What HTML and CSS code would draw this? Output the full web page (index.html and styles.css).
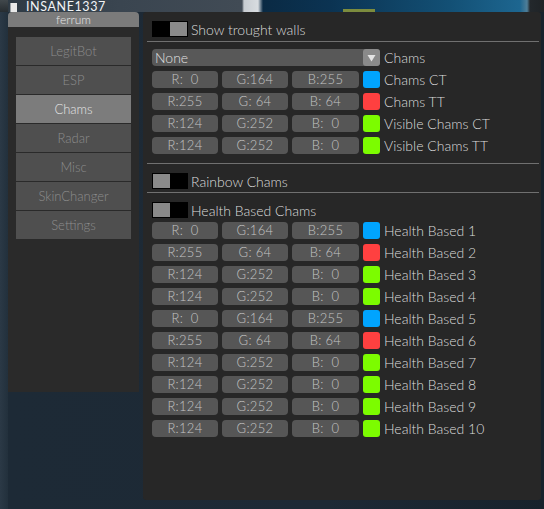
FILE: index.html
```html
<!DOCTYPE html>
<html>
<head>
<meta charset="utf-8">
<link rel="stylesheet" href="styles.css">
</head>
<body>
<div class="hud">
  <span class="avatar"></span>
  <span class="flag"></span>
  <span class="name">INSANE1337</span>
</div>
<div class="menus">
  <div class="side">
    <div class="side-title">ferrum</div>
    <div class="side-body">
      <div class="tab">LegitBot</div>
      <div class="tab">ESP</div>
      <div class="tab active">Chams</div>
      <div class="tab">Radar</div>
      <div class="tab">Misc</div>
      <div class="tab">SkinChanger</div>
      <div class="tab">Settings</div>
    </div>
  </div>
  <div class="panel">
    <div class="check first"><span class="toggle on"><i></i><i></i></span><span class="label">Show trought walls</span></div>
    <div class="sep"></div>
    <div class="combo-row">
      <div class="combo"><span class="combo-text">None</span><span class="combo-arrow"><svg width="9" height="8" viewBox="0 0 9 8"><path d="M0.5 1 L8.5 1 L4.5 7.5 Z" fill="#e4e4e4"/></svg></span></div>
      <span class="label">Chams</span>
    </div>
    <div class="rows top-rows">
      <div class="row"><span class="box">R:  0</span><span class="box">G:164</span><span class="box wide">B:255</span><span class="sw blue"></span><span class="label">Chams CT</span></div>
      <div class="row"><span class="box">R:255</span><span class="box">G: 64</span><span class="box wide">B: 64</span><span class="sw red"></span><span class="label">Chams TT</span></div>
      <div class="row"><span class="box">R:124</span><span class="box">G:252</span><span class="box wide">B:  0</span><span class="sw green"></span><span class="label">Visible Chams CT</span></div>
      <div class="row"><span class="box">R:124</span><span class="box">G:252</span><span class="box wide">B:  0</span><span class="sw green"></span><span class="label">Visible Chams TT</span></div>
    </div>
    <div class="sep sep2"></div>
    <div class="check second"><span class="toggle off"><i></i><i></i></span><span class="label">Rainbow Chams</span></div>
    <div class="sep sep3"></div>
    <div class="check third"><span class="toggle off"><i></i><i></i></span><span class="label">Health Based Chams</span></div>
    <div class="rows hb-rows">
      <div class="row"><span class="box">R:  0</span><span class="box">G:164</span><span class="box wide">B:255</span><span class="sw blue"></span><span class="label">Health Based 1</span></div>
      <div class="row"><span class="box">R:255</span><span class="box">G: 64</span><span class="box wide">B: 64</span><span class="sw red"></span><span class="label">Health Based 2</span></div>
      <div class="row"><span class="box">R:124</span><span class="box">G:252</span><span class="box wide">B:  0</span><span class="sw green"></span><span class="label">Health Based 3</span></div>
      <div class="row"><span class="box">R:124</span><span class="box">G:252</span><span class="box wide">B:  0</span><span class="sw green"></span><span class="label">Health Based 4</span></div>
      <div class="row"><span class="box">R:  0</span><span class="box">G:164</span><span class="box wide">B:255</span><span class="sw blue"></span><span class="label">Health Based 5</span></div>
      <div class="row"><span class="box">R:255</span><span class="box">G: 64</span><span class="box wide">B: 64</span><span class="sw red"></span><span class="label">Health Based 6</span></div>
      <div class="row"><span class="box">R:124</span><span class="box">G:252</span><span class="box wide">B:  0</span><span class="sw green"></span><span class="label">Health Based 7</span></div>
      <div class="row"><span class="box">R:124</span><span class="box">G:252</span><span class="box wide">B:  0</span><span class="sw green"></span><span class="label">Health Based 8</span></div>
      <div class="row"><span class="box">R:124</span><span class="box">G:252</span><span class="box wide">B:  0</span><span class="sw green"></span><span class="label">Health Based 9</span></div>
      <div class="row"><span class="box">R:124</span><span class="box">G:252</span><span class="box wide">B:  0</span><span class="sw green"></span><span class="label">Health Based 10</span></div>
    </div>
  </div>
</div>
</body>
</html>
```
FILE: styles.css
```css
html, body {
  margin: 0;
  padding: 0;
}
body {
  width: 544px;
  height: 509px;
  overflow: hidden;
  font-family: Lato, "Liberation Sans", sans-serif;
  font-weight: 300;
  background:
    linear-gradient(90deg, #2b3946 0px, #22303c 8px, #1d2a36 8px, #1d2935 60%, #17222c 100%);
}
.hud {
  height: 12px;
  overflow: hidden;
  display: flex;
  align-items: flex-start;
  background:
    linear-gradient(90deg, transparent 343px, #7c8c3e 343px, #7c8c3e 375px, transparent 375px) 0 9px / 100% 3px no-repeat,
    linear-gradient(90deg, #2e3a44 0px, #3a4550 120px, #414b55 242px, #c7ccd1 244px, #d8dce0 258px, #0a2a44 263px, #0b3352 330px, #135075 450px, #1d6690 520px, #4f7e98 527px, #23282c 530px, #1f2326 544px);
}
.avatar {
  width: 8px;
  height: 12px;
  background: linear-gradient(180deg, #41484c, #262c30);
}
.flag {
  width: 6px;
  height: 9px;
  margin: 3px 0 0 2px;
  background: #e9e9e9;
  border-left: 1px solid #9aa0a4;
}
.name {
  margin-left: 9px;
  color: #f2f4f6;
  font-weight: 400;
  font-size: 12.5px;
  line-height: 12px;
  height: 12px;
  padding-top: 1px;
  box-sizing: border-box;
  letter-spacing: 0.6px;
}
.menus {
  display: flex;
  align-items: flex-start;
  gap: 4px;
  padding-left: 8px;
}
.side {
  width: 131px;
}
.side-title {
  height: 15px;
  background: #7b7b7b;
  border-radius: 4px 4px 0 0;
  color: #e6e6e6;
  font-size: 12px;
  line-height: 15px;
  text-align: center;
}
.side-body {
  height: 355px;
  background: #2a2a2a;
  padding: 10px 8px 0 8px;
  display: flex;
  flex-direction: column;
  gap: 1px;
}
.tab {
  height: 28px;
  background: #4f4f4f;
  color: #8d8d8d;
  font-size: 13px;
  line-height: 28px;
  text-align: center;
}
.tab.active {
  background: #7c7c7c;
  color: #e4e4e4;
}
.panel {
  width: 387px;
  height: 479px;
  background: #272727;
  border-radius: 3px;
  padding: 9px 2px 0 9px;
}
.check {
  display: flex;
  align-items: center;
  height: 16px;
}
.second { margin-top: 9px; }
.third { margin-top: 9px; }
.toggle {
  display: flex;
  width: 34px;
  height: 14px;
  border: 1px solid #000;
  margin-right: 3px;
}
.toggle i {
  flex: 1;
  background: #000;
}
.toggle.on i:last-child { background: #8a8a8a; }
.toggle.off i:first-child { background: #8a8a8a; }
.label {
  color: #dcdcdc;
  font-size: 14px;
  line-height: 17px;
  white-space: nowrap;
}
.sep {
  height: 1px;
  background: #707070;
  margin: 4px 0 0 -5px;
}
.sep2 { margin-top: 9px; }
.sep3 { margin-top: 3px; }
.combo-row {
  display: flex;
  align-items: center;
  gap: 4px;
  margin-top: 7px;
}
.combo {
  width: 228px;
  height: 17px;
  background: #585858;
  border-radius: 4px;
  display: flex;
  justify-content: space-between;
}
.combo-text {
  color: #e0e0e0;
  font-size: 14px;
  line-height: 17px;
  padding-left: 3px;
}
.combo-arrow {
  width: 17px;
  height: 17px;
  background: #8a8a8a;
  border-radius: 3px;
  display: flex;
  align-items: center;
  justify-content: center;
}
.rows {
  display: flex;
  flex-direction: column;
  gap: 5px;
}
.top-rows { margin-top: 5px; }
.hb-rows { margin-top: 4px; }
.row {
  display: flex;
  align-items: center;
  gap: 4px;
  height: 17px;
}
.box {
  width: 66px;
  height: 17px;
  background: #565656;
  border-radius: 4px;
  color: #c4c4c4;
  font-size: 13px;
  line-height: 17px;
  text-align: center;
  white-space: pre;
  letter-spacing: 0.3px;
}
.box.wide { width: 67px; }
.sw {
  width: 17px;
  height: 17px;
  border-radius: 3px;
}
.blue { background: #00a4ff; }
.red { background: #ff4040; }
.green { background: #7cfc00; }
```
